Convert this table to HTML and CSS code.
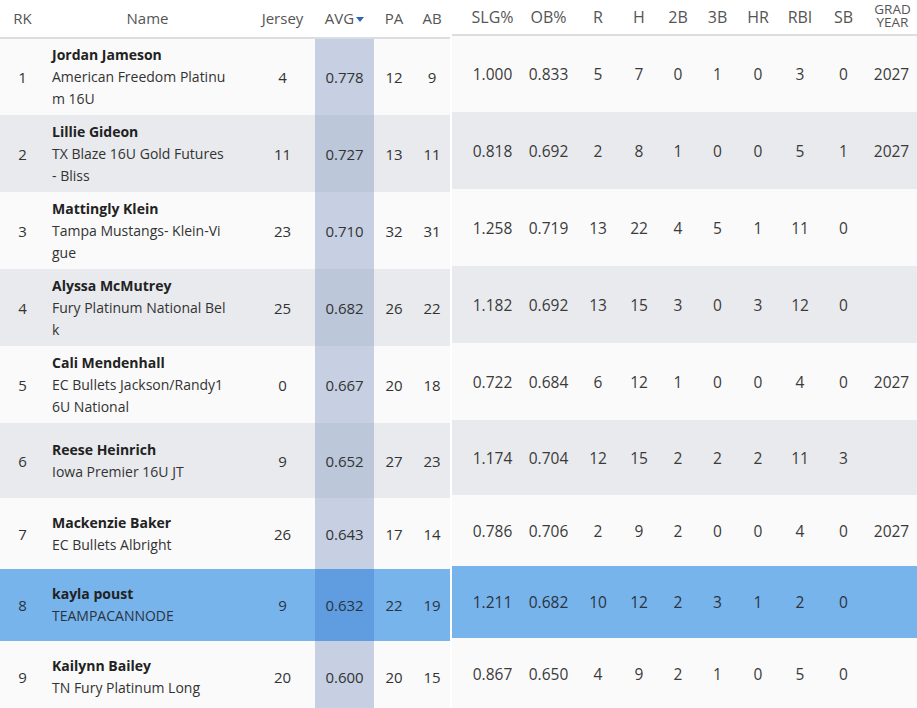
FILE: index.html
```html
<!DOCTYPE html>
<html>
<head>
<meta charset="utf-8">
<link rel="stylesheet" href="styles.css">
</head>
<body>
<div class="wrap">
  <table class="stats left">
    <colgroup>
      <col class="c-rk"><col class="c-name"><col class="c-jersey"><col class="c-avg"><col class="c-pa"><col class="c-ab">
    </colgroup>
    <thead>
      <tr><th>RK</th><th>Name</th><th>Jersey</th><th>AVG<span class="caret"></span></th><th>PA</th><th>AB</th></tr>
    </thead>
    <tbody>
      <tr class="r3 w"><td>1</td><td class="name"><b>Jordan Jameson</b><span>American Freedom Platinu<br>m 16U</span></td><td>4</td><td class="avg">0.778</td><td>12</td><td>9</td></tr>
      <tr class="r3 g"><td>2</td><td class="name"><b>Lillie Gideon</b><span>TX Blaze 16U Gold Futures<br>- Bliss</span></td><td>11</td><td class="avg">0.727</td><td>13</td><td>11</td></tr>
      <tr class="r3 w"><td>3</td><td class="name"><b>Mattingly Klein</b><span>Tampa Mustangs- Klein-Vi<br>gue</span></td><td>23</td><td class="avg">0.710</td><td>32</td><td>31</td></tr>
      <tr class="r3 g"><td>4</td><td class="name"><b>Alyssa McMutrey</b><span>Fury Platinum National Bel<br>k</span></td><td>25</td><td class="avg">0.682</td><td>26</td><td>22</td></tr>
      <tr class="r3 w"><td>5</td><td class="name"><b>Cali Mendenhall</b><span>EC Bullets Jackson/Randy1<br>6U National</span></td><td>0</td><td class="avg">0.667</td><td>20</td><td>18</td></tr>
      <tr class="r6 g"><td>6</td><td class="name"><b>Reese Heinrich</b><span>Iowa Premier 16U JT</span></td><td>9</td><td class="avg">0.652</td><td>27</td><td>23</td></tr>
      <tr class="r7 w"><td>7</td><td class="name"><b>Mackenzie Baker</b><span>EC Bullets Albright</span></td><td>26</td><td class="avg">0.643</td><td>17</td><td>14</td></tr>
      <tr class="r8 hl"><td>8</td><td class="name"><b>kayla poust</b><span>TEAMPACANNODE</span></td><td>9</td><td class="avg">0.632</td><td>22</td><td>19</td></tr>
      <tr class="r9 w"><td>9</td><td class="name"><b>Kailynn Bailey</b><span>TN Fury Platinum Long</span></td><td>20</td><td class="avg">0.600</td><td>20</td><td>15</td></tr>
    </tbody>
  </table>
  <table class="stats right">
    <colgroup>
      <col class="c-slg"><col class="c-ob"><col class="c-r"><col class="c-h"><col class="c-2b"><col class="c-3b"><col class="c-hr"><col class="c-rbi"><col class="c-sb"><col class="c-grad">
    </colgroup>
    <thead>
      <tr><th class="first">SLG%</th><th>OB%</th><th>R</th><th>H</th><th>2B</th><th>3B</th><th>HR</th><th>RBI</th><th>SB</th><th class="grad">GRAD<br>YEAR</th></tr>
    </thead>
    <tbody>
      <tr class="r3 w"><td class="first">1.000</td><td>0.833</td><td>5</td><td>7</td><td>0</td><td>1</td><td>0</td><td>3</td><td>0</td><td>2027</td></tr>
      <tr class="r3 g"><td class="first">0.818</td><td>0.692</td><td>2</td><td>8</td><td>1</td><td>0</td><td>0</td><td>5</td><td>1</td><td>2027</td></tr>
      <tr class="r3 w"><td class="first">1.258</td><td>0.719</td><td>13</td><td>22</td><td>4</td><td>5</td><td>1</td><td>11</td><td>0</td><td></td></tr>
      <tr class="r3 g"><td class="first">1.182</td><td>0.692</td><td>13</td><td>15</td><td>3</td><td>0</td><td>3</td><td>12</td><td>0</td><td></td></tr>
      <tr class="r3 w"><td class="first">0.722</td><td>0.684</td><td>6</td><td>12</td><td>1</td><td>0</td><td>0</td><td>4</td><td>0</td><td>2027</td></tr>
      <tr class="r6 g"><td class="first">1.174</td><td>0.704</td><td>12</td><td>15</td><td>2</td><td>2</td><td>2</td><td>11</td><td>3</td><td></td></tr>
      <tr class="r7 w"><td class="first">0.786</td><td>0.706</td><td>2</td><td>9</td><td>2</td><td>0</td><td>0</td><td>4</td><td>0</td><td>2027</td></tr>
      <tr class="r8 hl"><td class="first">1.211</td><td>0.682</td><td>10</td><td>12</td><td>2</td><td>3</td><td>1</td><td>2</td><td>0</td><td></td></tr>
      <tr class="r9 w"><td class="first">0.867</td><td>0.650</td><td>4</td><td>9</td><td>2</td><td>1</td><td>0</td><td>5</td><td>0</td><td></td></tr>
    </tbody>
  </table>
</div>
</body>
</html>
```

FILE: styles.css
```css
html, body {
  margin: 0;
  padding: 0;
  background: #ffffff;
}

body {
  width: 917px;
  height: 708px;
  overflow: hidden;
  font-family: "Open Sans", "Noto Sans", sans-serif;
  color: #333333;
}

.wrap {
  display: flex;
  gap: 2px;
  align-items: flex-start;
}

.stats {
  border-collapse: collapse;
  table-layout: fixed;
  font-size: 15px;
}

.left { width: 450px; }
.right { width: 465px; font-size: 15.5px; }

.c-rk { width: 45px; }
.c-name { width: 205px; }
.c-jersey { width: 65px; }
.c-avg { width: 59px; }
.c-pa { width: 40px; }
.c-ab { width: 36px; }

.c-slg { width: 69px; }
.c-ob { width: 55px; }
.c-r { width: 44px; }
.c-h { width: 38px; }
.c-2b { width: 40px; }
.c-3b { width: 39px; }
.c-hr { width: 42px; }
.c-rbi { width: 42px; }
.c-sb { width: 45px; }
.c-grad { width: 51px; }

th {
  font-weight: 400;
  color: #555555;
  text-align: center;
  padding: 0;
  border-bottom: 2px solid #dcdde0;
  white-space: nowrap;
}

.left th { font-size: 15px; padding-bottom: 2px; }
.right th { font-size: 16px; padding-bottom: 1px; }

.left thead tr { height: 38px; }
.right thead tr { height: 35px; }

.right th.grad {
  font-size: 13.5px;
  line-height: 13px;
  padding-bottom: 3px;
  padding-left: 2px;
}

th.first, td.first { padding-left: 12px; }

.caret {
  display: inline-block;
  width: 0;
  height: 0;
  margin-left: 2px;
  vertical-align: middle;
  border-left: 4px solid transparent;
  border-right: 4px solid transparent;
  border-top: 5px solid #2f66b3;
}

td {
  padding: 0;
  text-align: center;
  vertical-align: middle;
  white-space: nowrap;
}

.right td { color: #3a3a3a; }

td.name {
  text-align: left;
  padding-left: 7px;
  font-size: 14px;
  line-height: 22px;
}

td.name b {
  display: block;
  font-weight: 700;
  color: #222222;
}

td.name span { display: block; }

.r3 { height: 77px; }
.r6 { height: 75px; }
.r7 { height: 71px; }
.r8 { height: 72px; }
.r9 { height: 72px; }

.w td { background: #fafafa; }
.g td { background: #e8eaed; }
.hl td { background: #78b4ec; color: #2a3340; }
.right .hl td { color: #2a3340; }

.w td.avg { background: #c6d0e2; }
.g td.avg { background: #bcc7da; }
.hl td.avg { background: #5f9de0; }
```
